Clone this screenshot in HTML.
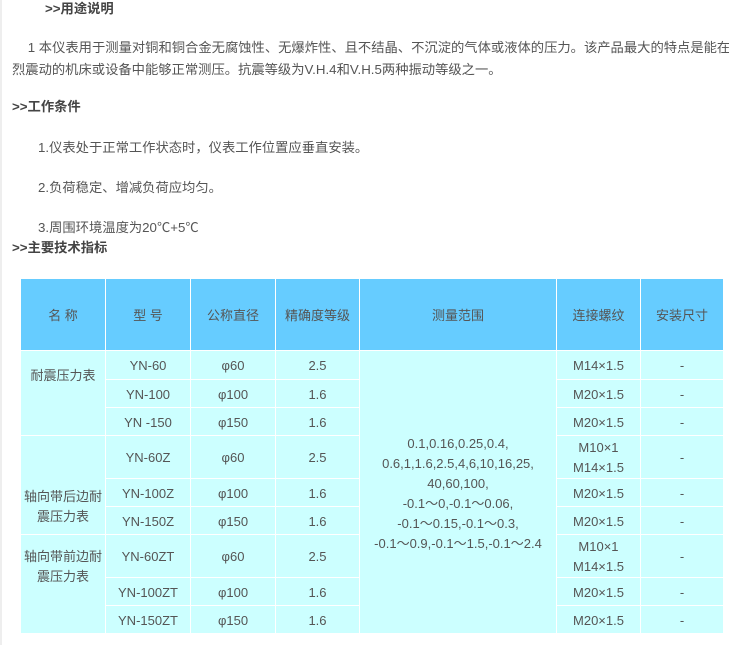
<!DOCTYPE html>
<html><head><meta charset="utf-8"><style>
body{margin:0;width:729px;height:645px;background:#fff;position:relative;overflow:hidden;font-family:"Liberation Sans","Noto Sans CJK SC",sans-serif;color:#555;}
.bl{position:absolute;left:0;top:0;width:2px;height:645px;background:#eee;}
.t{position:absolute;white-space:nowrap;font-size:13.3px;line-height:18px;}
.b{font-weight:bold;color:#444;}
.c{position:absolute;box-sizing:border-box;border-right:1px solid #fff;border-bottom:1px solid #fff;display:flex;align-items:center;justify-content:center;text-align:center;font-size:13px;line-height:20px;color:#555;padding-top:2px;}
.h{background:#66ccff;}
.d{background:#ccffff;}
</style></head><body>
<div class="bl"></div>
<div class="t b" style="left:45px;top:0px">&gt;&gt;用途说明</div>
<div class="t" style="left:24px;top:39px">&nbsp;1 本仪表用于测量对铜和铜合金无腐蚀性、无爆炸性、且不结晶、不沉淀的气体或液体的压力。该产品最大的特点是能在剧</div>
<div class="t" style="left:12px;top:61px">烈震动的机床或设备中能够正常测压。抗震等级为V.H.4和V.H.5两种振动等级之一。</div>
<div class="t b" style="left:12px;top:98px">&gt;&gt;工作条件</div>
<div class="t" style="left:38px;top:139px">1.仪表处于正常工作状态时，仪表工作位置应垂直安装。</div>
<div class="t" style="left:38px;top:179px">2.负荷稳定、增减负荷应均匀。</div>
<div class="t" style="left:38px;top:219px">3.周围环境温度为20℃+5℃</div>
<div class="t b" style="left:12px;top:239px">&gt;&gt;主要技术指标</div>

<div class="c h" style="left:21px;top:279px;width:85px;height:72px">名 称</div>
<div class="c h" style="left:106px;top:279px;width:85px;height:72px">型 号</div>
<div class="c h" style="left:191px;top:279px;width:85px;height:72px">公称直径</div>
<div class="c h" style="left:276px;top:279px;width:84px;height:72px">精确度等级</div>
<div class="c h" style="left:360px;top:279px;width:197px;height:72px">测量范围</div>
<div class="c h" style="left:557px;top:279px;width:84px;height:72px">连接螺纹</div>
<div class="c h" style="left:641px;top:279px;width:83px;height:72px">安装尺寸</div>

<div class="c d" style="left:21px;top:351px;width:85px;height:85px;align-items:flex-start;padding-top:15px">耐震压力表</div>
<div class="c d" style="left:21px;top:436px;width:85px;height:99px;align-items:flex-start;padding-top:51px">轴向带后边耐<br>震压力表</div>
<div class="c d" style="left:21px;top:535px;width:85px;height:99px;align-items:flex-start;padding-top:12px">轴向带前边耐<br>震压力表</div>

<div class="c d" style="left:360px;top:351px;width:197px;height:283px;padding-top:4px">0.1,0.16,0.25,0.4,<br>0.6,1,1.6,2.5,4,6,10,16,25,<br>40,60,100,<br>-0.1～0,-0.1～0.06,<br>-0.1～0.15,-0.1～0.3,<br>-0.1～0.9,-0.1～1.5,-0.1～2.4</div>

<div class="c d" style="left:106px;top:351px;width:85px;height:29px">YN-60</div>
<div class="c d" style="left:191px;top:351px;width:85px;height:29px">φ60</div>
<div class="c d" style="left:276px;top:351px;width:84px;height:29px">2.5</div>
<div class="c d" style="left:557px;top:351px;width:84px;height:29px">M14×1.5</div>
<div class="c d" style="left:641px;top:351px;width:83px;height:29px">-</div>

<div class="c d" style="left:106px;top:380px;width:85px;height:28px">YN-100</div>
<div class="c d" style="left:191px;top:380px;width:85px;height:28px">φ100</div>
<div class="c d" style="left:276px;top:380px;width:84px;height:28px">1.6</div>
<div class="c d" style="left:557px;top:380px;width:84px;height:28px">M20×1.5</div>
<div class="c d" style="left:641px;top:380px;width:83px;height:28px">-</div>

<div class="c d" style="left:106px;top:408px;width:85px;height:28px">YN -150</div>
<div class="c d" style="left:191px;top:408px;width:85px;height:28px">φ150</div>
<div class="c d" style="left:276px;top:408px;width:84px;height:28px">1.6</div>
<div class="c d" style="left:557px;top:408px;width:84px;height:28px">M20×1.5</div>
<div class="c d" style="left:641px;top:408px;width:83px;height:28px">-</div>

<div class="c d" style="left:106px;top:436px;width:85px;height:43px">YN-60Z</div>
<div class="c d" style="left:191px;top:436px;width:85px;height:43px">φ60</div>
<div class="c d" style="left:276px;top:436px;width:84px;height:43px">2.5</div>
<div class="c d" style="left:557px;top:436px;width:84px;height:43px">M10×1<br>M14×1.5</div>
<div class="c d" style="left:641px;top:436px;width:83px;height:43px">-</div>

<div class="c d" style="left:106px;top:479px;width:85px;height:28px">YN-100Z</div>
<div class="c d" style="left:191px;top:479px;width:85px;height:28px">φ100</div>
<div class="c d" style="left:276px;top:479px;width:84px;height:28px">1.6</div>
<div class="c d" style="left:557px;top:479px;width:84px;height:28px">M20×1.5</div>
<div class="c d" style="left:641px;top:479px;width:83px;height:28px">-</div>

<div class="c d" style="left:106px;top:507px;width:85px;height:28px">YN-150Z</div>
<div class="c d" style="left:191px;top:507px;width:85px;height:28px">φ150</div>
<div class="c d" style="left:276px;top:507px;width:84px;height:28px">1.6</div>
<div class="c d" style="left:557px;top:507px;width:84px;height:28px">M20×1.5</div>
<div class="c d" style="left:641px;top:507px;width:83px;height:28px">-</div>

<div class="c d" style="left:106px;top:535px;width:85px;height:43px">YN-60ZT</div>
<div class="c d" style="left:191px;top:535px;width:85px;height:43px">φ60</div>
<div class="c d" style="left:276px;top:535px;width:84px;height:43px">2.5</div>
<div class="c d" style="left:557px;top:535px;width:84px;height:43px">M10×1<br>M14×1.5</div>
<div class="c d" style="left:641px;top:535px;width:83px;height:43px">-</div>

<div class="c d" style="left:106px;top:578px;width:85px;height:28px">YN-100ZT</div>
<div class="c d" style="left:191px;top:578px;width:85px;height:28px">φ100</div>
<div class="c d" style="left:276px;top:578px;width:84px;height:28px">1.6</div>
<div class="c d" style="left:557px;top:578px;width:84px;height:28px">M20×1.5</div>
<div class="c d" style="left:641px;top:578px;width:83px;height:28px">-</div>

<div class="c d" style="left:106px;top:606px;width:85px;height:28px">YN-150ZT</div>
<div class="c d" style="left:191px;top:606px;width:85px;height:28px">φ150</div>
<div class="c d" style="left:276px;top:606px;width:84px;height:28px">1.6</div>
<div class="c d" style="left:557px;top:606px;width:84px;height:28px">M20×1.5</div>
<div class="c d" style="left:641px;top:606px;width:83px;height:28px">-</div>
</body></html>
